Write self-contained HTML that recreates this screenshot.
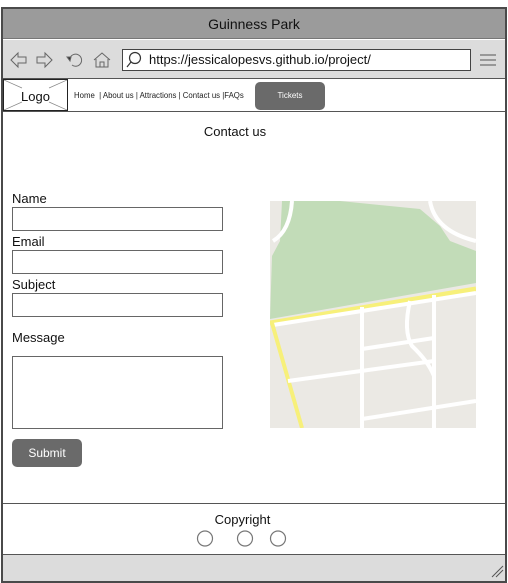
<!DOCTYPE html>
<html><head><meta charset="utf-8"><style>
*{margin:0;padding:0;box-sizing:border-box}
body{width:508px;height:583px;background:#fff;font-family:"Liberation Sans",sans-serif;position:relative;overflow:hidden;color:#111}
.a{position:absolute}
.frame{left:1px;top:7px;width:506px;height:576px;border:2px solid #4a4a4a}
.inp{border:1.5px solid #666;background:#fff}
.lbl{font-size:13px}
</style></head><body>
<div class="a frame"></div>
<div class="a" style="left:3px;top:9px;width:502px;height:30px;background:#9b9b9b;border-bottom:1px solid #777;text-align:center;font-size:14px;line-height:30px">Guinness Park</div>
<div class="a" style="left:3px;top:40px;width:502px;height:39px;background:#dcdcdc;border-bottom:1px solid #555"></div>
<svg class="a" style="left:8px;top:48px" width="110" height="24" viewBox="0 0 110 24" fill="none" stroke="#666" stroke-width="1">
<path d="M3 12 L10 5 L10 9 L18 9 L18 15 L10 15 L10 19 Z"/>
<path d="M44 12 L37 5 L37 9 L29 9 L29 15 L37 15 L37 19 Z"/>
<path d="M62 10 A6 6 0 1 1 64 17"/><path d="M59 9 L63 9 L62 13 Z" fill="#333"/>
<path d="M86 12 L94 5 L102 12 M88 11 L88 19 L100 19 L100 11 M92 19 L92 14 L96 14 L96 19"/>
</svg>
<div class="a inp" style="left:122px;top:49px;width:349px;height:22px;border-color:#444"></div>
<svg class="a" style="left:126px;top:51px" width="18" height="18" fill="none" stroke="#333" stroke-width="1.2"><circle cx="9" cy="7" r="5.5"/><path d="M5 11 L1 16"/></svg>
<div class="a" style="left:149px;top:50px;font-size:13px;line-height:19px">https://jessicalopesvs.github.io/project/</div>
<svg class="a" style="left:480px;top:53px" width="17" height="14" stroke="#555" stroke-width="1"><path d="M0 2H16M0 7H16M0 12H16"/></svg>
<div class="a" style="left:3px;top:79px;width:65px;height:32px;border:1.5px solid #222;background:#fff"></div>
<svg class="a" style="left:4px;top:80px" width="63" height="30" stroke="#888" stroke-width="0.7"><path d="M0 0L18 8M63 0L45 8M0 30L18 22M63 30L45 22"/></svg>
<div class="a" style="left:3px;top:89px;width:65px;text-align:center;font-size:13px">Logo</div>
<div class="a" style="left:74px;top:91px;font-size:7.8px;color:#222">Home &nbsp;| About us | Attractions | Contact us |FAQs</div>
<div class="a" style="left:255px;top:82px;width:70px;height:28px;background:#6a6a6a;border-radius:5px;color:#fff;font-size:8px;text-align:center;line-height:28px">Tickets</div>
<div class="a" style="left:3px;top:111px;width:502px;height:1px;background:#555"></div>
<div class="a" style="left:0;top:124px;width:470px;text-align:center;font-size:13px">Contact us</div>
<div class="a lbl" style="left:12px;top:191px">Name</div>
<div class="a inp" style="left:12px;top:207px;width:211px;height:24px"></div>
<div class="a lbl" style="left:12px;top:234px">Email</div>
<div class="a inp" style="left:12px;top:250px;width:211px;height:24px"></div>
<div class="a lbl" style="left:12px;top:277px">Subject</div>
<div class="a inp" style="left:12px;top:293px;width:211px;height:24px"></div>
<div class="a lbl" style="left:12px;top:330px">Message</div>
<div class="a inp" style="left:12px;top:356px;width:211px;height:73px"></div>
<div class="a" style="left:12px;top:439px;width:70px;height:28px;background:#6a6a6a;border-radius:5px;color:#fff;font-size:12px;text-align:center;line-height:28px">Submit</div>
<svg class="a" style="left:270px;top:201px" width="206" height="227" viewBox="0 0 206 227">
<rect width="206" height="227" fill="#ebe9e4"/>
<path d="M12 0 L70 0 L150 8 L170 25 L180 40 L206 50 L206 82 L0 118 L2 55 L10 40 Z" fill="#c2dcb8"/>
<path d="M22 0 Q20 30 3 40" stroke="#fff" stroke-width="4" fill="none"/>
<path d="M160 0 Q165 30 206 40" stroke="#fff" stroke-width="4" fill="none"/>
<path d="M0 122 L206 88" stroke="#f7f07a" stroke-width="5"/>
<path d="M3 124 L206 92" stroke="#fff" stroke-width="4"/>
<path d="M2 122 L32 227" stroke="#f7f07a" stroke-width="4"/>
<path d="M92 106 L92 227 M164 94 L164 227" stroke="#fff" stroke-width="4"/>
<path d="M92 148 L164 137 M18 180 L164 160 M92 218 L206 200" stroke="#fff" stroke-width="4"/>
<path d="M140 100 Q133 130 142 145 Q158 160 164 175" stroke="#fff" stroke-width="4" fill="none"/>
</svg>
<div class="a" style="left:3px;top:503px;width:502px;height:1px;background:#555"></div>
<div class="a" style="left:0;top:512px;width:485px;text-align:center;font-size:13px">Copyright</div>
<svg class="a" style="left:195px;top:529px" width="95" height="20" fill="#fff" stroke="#777" stroke-width="1.2"><circle cx="10" cy="9.5" r="7.5"/><circle cx="50" cy="9.5" r="7.5"/><circle cx="83" cy="9.5" r="7.5"/></svg>
<div class="a" style="left:3px;top:554px;width:502px;height:27px;background:#dcdcdc;border-top:1.5px solid #555"></div>
<svg class="a" style="left:490px;top:564px" width="14" height="14" stroke="#555" stroke-width="1"><path d="M2 13L13 2M6 13L13 6"/></svg>
</body></html>
